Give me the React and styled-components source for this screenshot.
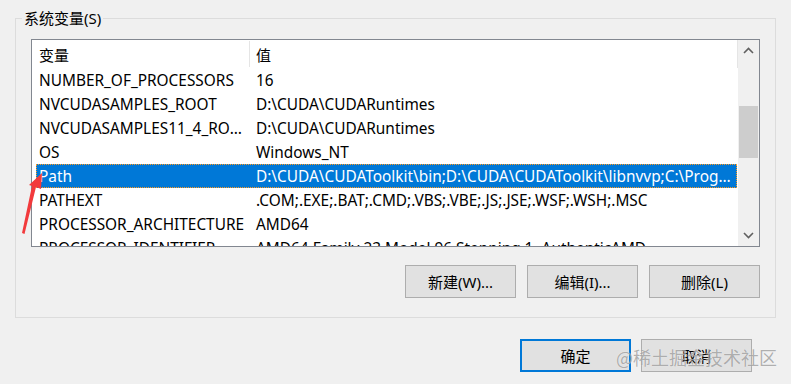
import React from "react";
import styled, { createGlobalStyle } from "styled-components";

const GlobalStyle = createGlobalStyle`
  html, body {
    margin: 0;
    background: #f0f0f0;
  }
  body {
    font-family: "Noto Sans", "Noto Sans CJK SC", sans-serif;
    font-size: 15px;
    color: #000;
  }
`;

const vars = [
  ["NUMBER_OF_PROCESSORS", "16"],
  ["NVCUDASAMPLES_ROOT", "D:\\CUDA\\CUDARuntimes"],
  ["NVCUDASAMPLES11_4_ROOT", "D:\\CUDA\\CUDARuntimes"],
  ["OS", "Windows_NT"],
  ["Path", "D:\\CUDA\\CUDAToolkit\\bin;D:\\CUDA\\CUDAToolkit\\libnvvp;C:\\Program Files\\NVIDIA"],
  ["PATHEXT", ".COM;.EXE;.BAT;.CMD;.VBS;.VBE;.JS;.JSE;.WSF;.WSH;.MSC"],
  ["PROCESSOR_ARCHITECTURE", "AMD64"],
  ["PROCESSOR_IDENTIFIER", "AMD64 Family 23 Model 96 Stepping 1, AuthenticAMD"],
];

const App = () => {
  return (
    <Window>
      <GlobalStyle />
      <Group>
        <Legend>系统变量(S)</Legend>
        <ListView>
          <Table>
            <Header>
              <HeadCell divider>变量</HeadCell>
              <HeadCell>值</HeadCell>
            </Header>
            {vars.map(([name, value]) => (
              <Row key={name} selected={name === "Path"}>
                <NameCell>{name}</NameCell>
                <ValueCell>{value}</ValueCell>
              </Row>
            ))}
          </Table>
          <ScrollBar>
            <ArrowBtn>
              <svg width="11" height="7" viewBox="0 0 11 7">
                <polyline points="1,6 5.5,1.5 10,6" fill="none" stroke="#606060" strokeWidth="1.6" />
              </svg>
            </ArrowBtn>
            <Track>
              <Thumb />
            </Track>
            <ArrowBtn>
              <svg width="11" height="7" viewBox="0 0 11 7">
                <polyline points="1,1 5.5,5.5 10,1" fill="none" stroke="#606060" strokeWidth="1.6" />
              </svg>
            </ArrowBtn>
          </ScrollBar>
        </ListView>
        <ButtonRow>
          <Button>新建(W)...</Button>
          <Button>编辑(I)...</Button>
          <Button>删除(L)</Button>
        </ButtonRow>
      </Group>
      <Footer>
        <Button primary>确定</Button>
        <Button>取消</Button>
      </Footer>

      <Arrow width="60" height="250" viewBox="0 0 60 250">
        <polygon
          points="42,173 41,189 36,187 24.5,234 22,233 32,186 29,185"
          fill="#f23a3c"
        />
      </Arrow>
      <Watermark>@稀土掘金技术社区</Watermark>
    </Window>
  );
};

const Window = styled.div`
  position: relative;
  width: 791px;
  height: 384px;
  overflow: hidden;
  background: #f0f0f0;
`;

const Group = styled.fieldset`
  box-sizing: border-box;
  width: 761px;
  margin: 8px 0 0 15px;
  padding: 11px 15px 19px 15px;
  border: 1px solid #dcdcdc;
  min-width: 0;
`;

const Legend = styled.legend`
  margin-left: -9px;
  padding: 0 2px;
  line-height: 20px;
  font-size: 15px;
`;

const ListView = styled.div`
  box-sizing: border-box;
  width: 729px;
  height: 208px;
  border: 1px solid #828790;
  background: #fff;
  display: grid;
  grid-template-columns: 1fr 21px;
  overflow: hidden;
  font-size: 15.4px;
`;

const Table = styled.div`
  overflow: hidden;
  min-width: 0;
`;

const Header = styled.div`
  display: grid;
  grid-template-columns: 218px 1fr;
  height: 28px;
  border-right: 1px solid #e5e5e5;
  font-size: 15px;
`;

const HeadCell = styled.div`
  display: flex;
  align-items: center;
  padding-left: ${(p) => (p.divider ? "7px" : "6px")};
  border-right: ${(p) => (p.divider ? "1px solid #e5e5e5" : "none")};
  margin: 1px 0;
`;

const Row = styled.div`
  display: grid;
  grid-template-columns: 214px 1fr;
  height: 24px;
  margin-left: 4px;
  margin-right: 1px;
  align-items: center;
  box-sizing: border-box;
  background: ${(p) => (p.selected ? "#0078d7" : "transparent")};
  color: ${(p) => (p.selected ? "#fff" : "#000")};
  outline: ${(p) => (p.selected ? "1px dotted #ff9a1f" : "none")};
  outline-offset: -1px;
`;

const NameCell = styled.div`
  padding-left: 3px;
  padding-right: 1px;
  white-space: nowrap;
  overflow: hidden;
  text-overflow: ellipsis;
`;

const ValueCell = styled.div`
  padding-left: 6px;
  padding-right: 4px;
  white-space: nowrap;
  overflow: hidden;
  text-overflow: ellipsis;
`;

const ScrollBar = styled.div`
  background: #f0f0f0;
  display: flex;
  flex-direction: column;
`;

const ArrowBtn = styled.div`
  height: 21px;
  display: flex;
  align-items: center;
  justify-content: center;
`;

const Track = styled.div`
  flex: 1;
  padding: 45px 1px 0;
`;

const Thumb = styled.div`
  height: 52px;
  background: #cdcdcd;
`;

const ButtonRow = styled.div`
  display: flex;
  justify-content: flex-end;
  gap: 11px;
  margin-top: 18px;
`;

const Button = styled.button`
  box-sizing: border-box;
  width: 111px;
  height: 33px;
  padding: 0;
  font-family: "Noto Sans", "Noto Sans CJK SC", sans-serif;
  font-size: 15px;
  color: #000;
  background: #e1e1e1;
  border: ${(p) => (p.primary ? "2px solid #0078d7" : "1px solid #adadad")};
`;

const Footer = styled.div`
  display: flex;
  justify-content: flex-end;
  gap: 10px;
  margin-top: 21px;
  padding-right: 39px;
`;

const Arrow = styled.svg`
  position: absolute;
  left: 0;
  top: 0;
  pointer-events: none;
`;

const Watermark = styled.div`
  position: absolute;
  right: 14px;
  top: 344px;
  font-family: "Noto Sans CJK SC", sans-serif;
  font-size: 18px;
  line-height: 26px;
  color: rgba(110, 110, 110, 0.55);
  text-shadow: 0 0 1px rgba(255, 255, 255, 0.8);
  pointer-events: none;
`;

export default App;
